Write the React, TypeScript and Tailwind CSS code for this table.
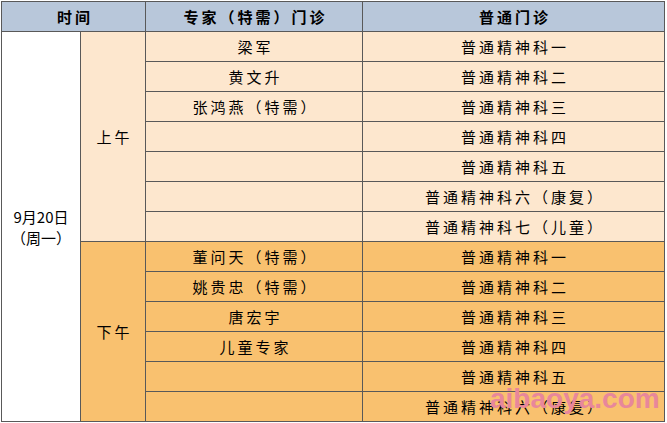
const morningExperts = ['梁军', '黄文升', '张鸿燕（特需）', '', '', '', ''];
const morningClinics = [
  '普通精神科一',
  '普通精神科二',
  '普通精神科三',
  '普通精神科四',
  '普通精神科五',
  '普通精神科六（康复）',
  '普通精神科七（儿童）',
];
const afternoonExperts = ['董问天（特需）', '姚贵忠（特需）', '唐宏宇', '儿童专家', '', ''];
const afternoonClinics = [
  '普通精神科一',
  '普通精神科二',
  '普通精神科三',
  '普通精神科四',
  '普通精神科五',
  '普通精神科六（康复）',
];

const cell = 'flex items-center justify-center tracking-[3px] pl-[3px] text-black';

export default function App() {
  const morningRows = morningExperts.map((name, i) => ({ name, clinic: morningClinics[i] }));
  const afternoonRows = afternoonExperts.map((name, i) => ({ name, clinic: afternoonClinics[i] }));

  return (
    <div
      className="relative w-[667px] h-[423px] bg-white pt-px pl-px text-[15px] leading-none"
      style={{ fontFamily: '"Noto Sans CJK SC", "Noto Sans", sans-serif' }}
    >
      <div className="grid w-[664px] grid-cols-[78px_64px_216px_301px] grid-rows-[repeat(14,29px)] gap-px border border-[#595959] bg-[#595959]">
        {/* Header */}
        <div className={`${cell} col-span-2 bg-[#b8c7da] font-bold`}>时间</div>
        <div className={`${cell} bg-[#b8c7da] font-bold`}>专家（特需）门诊</div>
        <div className={`${cell} bg-[#b8c7da] font-bold`}>普通门诊</div>

        {/* Date */}
        <div className="col-start-1 row-start-2 row-span-13 flex flex-col items-center justify-center gap-[6px] bg-white text-black">
          <span>9月20日</span>
          <span>（周一）</span>
        </div>

        {/* Morning */}
        <div className={`${cell} col-start-2 row-start-2 row-span-7 bg-[#fde7ce]`}>上午</div>
        {morningRows.map((r, i) => (
          <div key={`m-${i}`} className="contents">
            <div className={`${cell} col-start-3 bg-[#fde7ce]`} style={{ gridRowStart: i + 2 }}>
              {r.name}
            </div>
            <div className={`${cell} col-start-4 bg-[#fde7ce]`} style={{ gridRowStart: i + 2 }}>
              {r.clinic}
            </div>
          </div>
        ))}

        {/* Afternoon */}
        <div className={`${cell} col-start-2 row-start-9 row-span-6 bg-[#f9c16f]`}>下午</div>
        {afternoonRows.map((r, i) => (
          <div key={`a-${i}`} className="contents">
            <div className={`${cell} col-start-3 bg-[#f9c16f]`} style={{ gridRowStart: i + 9 }}>
              {r.name}
            </div>
            <div className={`${cell} col-start-4 bg-[#f9c16f]`} style={{ gridRowStart: i + 9 }}>
              {r.clinic}
            </div>
          </div>
        ))}
      </div>

      {/* Watermark */}
      <div
        className="absolute left-[490px] top-[385px] text-[28px] font-bold leading-none text-[#e8879b]"
        style={{ fontFamily: '"Liberation Sans", Arial, sans-serif' }}
      >
        aibaoya.com
      </div>
    </div>
  );
}
